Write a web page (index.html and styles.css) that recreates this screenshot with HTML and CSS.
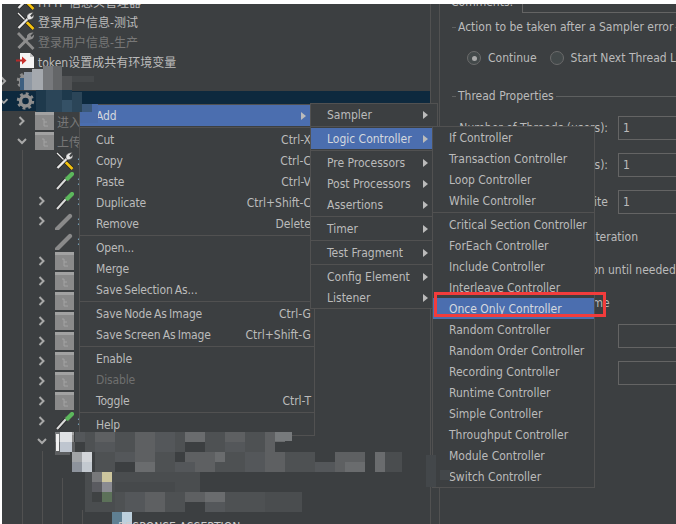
FILE: index.html
```html
<!DOCTYPE html>
<html lang="zh">
<head>
<meta charset="utf-8">
<title>JMeter context menu</title>
<link rel="stylesheet" href="styles.css">
</head>
<body>
<svg class="defs" width="0" height="0">
  <defs>
    <symbol id="i-tools" viewBox="0 0 18 18">
      <path d="M1.500 1l8 8" stroke="#222" stroke-width="2.600"/>
      <path d="M1.500 1l8 8" stroke="#eee" stroke-width="1.300"/>
      <path d="M10 10l7 7" stroke="#222" stroke-width="4"/>
      <path d="M10 10l7 7" stroke="#f4c20d" stroke-width="2.600"/>
      <path d="M2 16L12 6" stroke="#222" stroke-width="3.600"/>
      <path d="M2 16L12 6" stroke="#e8e8e8" stroke-width="2.400"/>
      <path d="M10.500 3.500Q12.500 .2 17 .5L14 3.500 15 5l2.600-2.400Q17.600 7 14 7.600L12 8Q9.700 6 10.500 3.500z" fill="#e8e8e8" stroke="#333" stroke-width=".5"/>
    </symbol>
    <symbol id="i-tools-off" viewBox="0 0 18 18">
      <path d="M1.500 1l15.500 16" stroke="#8a8a8a" stroke-width="2.800"/>
      <path d="M2 16L12 6" stroke="#8e8e8e" stroke-width="3"/>
      <path d="M10.500 3.500Q12.500 .2 17 .5L14 3.500 15 5l2.600-2.400Q17.600 7 14 7.600L12 8Q9.700 6 10.500 3.500z" fill="#8e8e8e"/>
    </symbol>
    <symbol id="i-doc" viewBox="0 0 19 18">
      <path d="M4 1h10l4 4v11H4z" fill="#f4f4f4"/>
      <path d="M14 1v4h4z" fill="#c4c4c4"/>
      <path d="M0 8.500h7" stroke="#b52a2a" stroke-width="2"/>
      <path d="M6 4.500l4.500 4-4.500 4z" fill="#c9302c"/>
    </symbol>
    <symbol id="i-gear" viewBox="0 0 18 18">
      <circle cx="9" cy="9" r="7.200" fill="none" stroke="#8b8b8b" stroke-width="3" stroke-dasharray="2.800 2.850"/>
      <circle cx="9" cy="9" r="5" fill="none" stroke="#8f8f8f" stroke-width="3.400"/>
    </symbol>
    <symbol id="i-box" viewBox="0 0 19 18">
      <rect x="0" y="0" width="19" height="18" fill="#8a8a8a"/>
      <rect x="0" y="0" width="19" height="3" fill="#a2a2a2"/>
      <path d="M7 7h2v7h4M9 10h3" fill="none" stroke="#a3a3a3" stroke-width="1"/>
    </symbol>
    <symbol id="i-drop" viewBox="0 0 19 18">
      <path d="M2 17L11 7" stroke="#222" stroke-width="3.600"/>
      <path d="M2 17L11 7" stroke="#d9d9d9" stroke-width="2.200"/>
      <path d="M10 5l4 4" stroke="#555" stroke-width="2"/>
      <path d="M12.500 6.500L17 2" stroke="#5cb85c" stroke-width="4.200" stroke-linecap="round"/>
    </symbol>
    <symbol id="i-drop-off" viewBox="0 0 19 18">
      <path d="M2 17L15 4" stroke="#8a8a8a" stroke-width="4.200" stroke-linecap="round"/>
    </symbol>
    <symbol id="c-right" viewBox="0 0 18 20"><path d="M2.500 6l4 4-4 4" fill="none" stroke="#a8a8a8" stroke-width="2"/></symbol>
    <symbol id="c-down" viewBox="0 0 18 20"><path d="M1 8l4 4 4-4" fill="none" stroke="#a8a8a8" stroke-width="2"/></symbol>
  </defs>
</svg>

<div class="app">
  <div class="tree-pane">
    <ul class="tree">
      <li class="row l0"><span class="chev"></span><svg class="ico"><use href="#i-tools"/></svg><span>HTTP 信息头管理器</span></li>
      <li class="row l0"><span class="chev"></span><svg class="ico"><use href="#i-tools"/></svg><span>登录用户信息-测试</span></li>
      <li class="row l0 off"><span class="chev"></span><svg class="ico"><use href="#i-tools-off"/></svg><span>登录用户信息-生产</span></li>
      <li class="row l0"><span class="chev"></span><svg class="ico"><use href="#i-doc"/></svg><span>token设置成共有环境变量</span></li>
      <li class="row l0"><svg class="chev"><use href="#c-right"/></svg><svg class="ico"><use href="#i-gear"/></svg></li>
      <li class="row l0 sel"><svg class="chev"><use href="#c-down"/></svg><svg class="ico"><use href="#i-gear"/></svg></li>
      <li class="row l1 off"><svg class="chev"><use href="#c-right"/></svg><svg class="ico"><use href="#i-box"/></svg><span>进入</span></li>
      <li class="row l1 off"><svg class="chev"><use href="#c-down"/></svg><svg class="ico"><use href="#i-box"/></svg><span>上传</span></li>
      <li class="row l2"><span class="chev"></span><svg class="ico"><use href="#i-tools"/></svg><span>:</span></li>
      <li class="row l2"><span class="chev"></span><svg class="ico"><use href="#i-drop"/></svg><span>:</span></li>
      <li class="row l2"><svg class="chev"><use href="#c-right"/></svg><svg class="ico"><use href="#i-drop"/></svg><span>:</span></li>
      <li class="row l2"><svg class="chev"><use href="#c-right"/></svg><svg class="ico"><use href="#i-drop-off"/></svg><span>:</span></li>
      <li class="row l2"><span class="chev"></span><svg class="ico"><use href="#i-drop-off"/></svg><span>:</span></li>
      <li class="row l2"><svg class="chev"><use href="#c-right"/></svg><svg class="ico"><use href="#i-box"/></svg></li>
      <li class="row l2"><svg class="chev"><use href="#c-right"/></svg><svg class="ico"><use href="#i-box"/></svg></li>
      <li class="row l2"><svg class="chev"><use href="#c-right"/></svg><svg class="ico"><use href="#i-box"/></svg></li>
      <li class="row l2"><svg class="chev"><use href="#c-right"/></svg><svg class="ico"><use href="#i-box"/></svg></li>
      <li class="row l2"><svg class="chev"><use href="#c-right"/></svg><svg class="ico"><use href="#i-box"/></svg></li>
      <li class="row l2"><svg class="chev"><use href="#c-right"/></svg><svg class="ico"><use href="#i-box"/></svg></li>
      <li class="row l2"><svg class="chev"><use href="#c-right"/></svg><svg class="ico"><use href="#i-box"/></svg></li>
      <li class="row l2"><svg class="chev"><use href="#c-right"/></svg><svg class="ico"><use href="#i-box"/></svg></li>
      <li class="row l2"><svg class="chev"><use href="#c-right"/></svg><svg class="ico"><use href="#i-drop"/></svg><span>:</span></li>
      <li class="row l2"><svg class="chev"><use href="#c-down"/></svg><svg class="ico"><use href="#i-box"/></svg></li>
    </ul>
  </div>

  <div class="form-pane">
    <div class="comments"><span class="comments-label">Comments:</span><span class="comments-input"></span></div>
    <div class="legend legend-action"><span>Action to be taken after a Sampler error</span></div>
    <div class="radios">
      <span class="radio on"></span><span class="radio-text">Continue</span>
      <span class="radio"></span><span class="radio-text">Start Next Thread Loop</span>
    </div>
    <div class="legend legend-thread"><span>Thread Properties</span></div>
    <div class="fields">
      <div class="field"><span class="field-label">Number of Threads (users):</span><span class="input">1</span></div>
      <div class="field"><span class="field-label">Ramp-up period (seconds):</span><span class="input">1</span></div>
      <div class="field last"><span class="field-label">Loop Count: Infinite</span><span class="input">1</span></div>
      <div class="check">Same user on each iteration</div>
      <div class="check">Delay Thread creation until needed</div>
      <div class="check">Specify Thread lifetime</div>
      <div class="field"><span class="field-label short">Duration (seconds)</span><span class="input"></span></div>
      <div class="field"><span class="field-label short">Startup delay (seconds)</span><span class="input"></span></div>
    </div>
  </div>
</div>

<div class="menu menu-main">
  <div class="item active"><span>Add</span><i class="arrow"></i></div>
  <hr>
  <div class="item"><span>Cut</span><kbd>Ctrl-X</kbd></div>
  <div class="item"><span>Copy</span><kbd>Ctrl-C</kbd></div>
  <div class="item"><span>Paste</span><kbd>Ctrl-V</kbd></div>
  <div class="item"><span>Duplicate</span><kbd>Ctrl+Shift-C</kbd></div>
  <div class="item"><span>Remove</span><kbd>Delete</kbd></div>
  <hr>
  <div class="item"><span>Open...</span></div>
  <div class="item"><span>Merge</span></div>
  <div class="item"><span>Save Selection As...</span></div>
  <hr>
  <div class="item"><span>Save Node As Image</span><kbd>Ctrl-G</kbd></div>
  <div class="item"><span>Save Screen As Image</span><kbd>Ctrl+Shift-G</kbd></div>
  <hr>
  <div class="item"><span>Enable</span></div>
  <div class="item disabled"><span>Disable</span></div>
  <div class="item"><span>Toggle</span><kbd>Ctrl-T</kbd></div>
  <hr>
  <div class="item"><span>Help</span></div>
</div>

<div class="menu menu-add">
  <div class="item"><span>Sampler</span><i class="arrow"></i></div>
  <hr>
  <div class="item active"><span>Logic Controller</span><i class="arrow"></i></div>
  <hr>
  <div class="item"><span>Pre Processors</span><i class="arrow"></i></div>
  <div class="item"><span>Post Processors</span><i class="arrow"></i></div>
  <div class="item"><span>Assertions</span><i class="arrow"></i></div>
  <hr>
  <div class="item"><span>Timer</span><i class="arrow"></i></div>
  <hr>
  <div class="item"><span>Test Fragment</span><i class="arrow"></i></div>
  <hr>
  <div class="item"><span>Config Element</span><i class="arrow"></i></div>
  <div class="item"><span>Listener</span><i class="arrow"></i></div>
</div>

<div class="menu menu-logic">
  <div class="item"><span>If Controller</span></div>
  <div class="item"><span>Transaction Controller</span></div>
  <div class="item"><span>Loop Controller</span></div>
  <div class="item"><span>While Controller</span></div>
  <hr>
  <div class="item"><span>Critical Section Controller</span></div>
  <div class="item"><span>ForEach Controller</span></div>
  <div class="item"><span>Include Controller</span></div>
  <div class="item"><span>Interleave Controller</span></div>
  <div class="item active"><span>Once Only Controller</span></div>
  <div class="item"><span>Random Controller</span></div>
  <div class="item"><span>Random Order Controller</span></div>
  <div class="item"><span>Recording Controller</span></div>
  <div class="item"><span>Runtime Controller</span></div>
  <div class="item"><span>Simple Controller</span></div>
  <div class="item"><span>Throughput Controller</span></div>
  <div class="item"><span>Module Controller</span></div>
  <div class="item"><span>Switch Controller</span></div>
</div>

<svg class="mosaic" width="676" height="524" viewBox="0 0 676 524">
  <path fill="#4a6ba8" d="M80 104h18v19H80z"/>
  <path fill="#3d5f80" d="M20 78h8v12h-8z"/>
  <path fill="#8f98a3" d="M24 72h10v18H24z"/>
  <path fill="#a5a9ae" d="M32 69h11v21H32z"/>
  <path fill="#77797c" d="M43 66h10v24H43z"/>
  <path fill="#646668" d="M53 66h9v24h-9z"/>
  <path fill="#505254" d="M62 76h10v14H62z"/>
  <path fill="#1e394c" d="M36 90h10v22H36zM62 90h10v10H62z"/>
  <path fill="#2b4558" d="M46 90h16v22H46zM72 92h10v20H72z"/>
  <path fill="#355166" d="M62 100h10v12H62z"/>
  <path fill="#3b587a" d="M82 104h10v8H82z"/>
  <path fill="#45484a" d="M72 76h22v6H72z"/>
  <path fill="#54575a" d="M75 432h10v10H75zM95 442h20v10H95zM155 432h20v20h-20zM225 442h20v10h-20zM115 452h20v10h-20zM175 462h20v10h-20zM245 452h20v20h-20zM315 462h20v10h-20zM125 492h20v20h-20zM205 502h20v10h-20z"/>
  <path fill="#4e5153" d="M85 432h10v20H85zM115 432h20v20h-20zM175 432h10v20h-10zM205 432h20v20h-20zM245 432h20v20h-20zM95 452h20v20H95zM155 452h20v20h-20zM215 452h30v20h-30zM285 452h30v20h-30zM95 492h30v20H95zM165 492h20v20h-20zM225 492h40v20h-40z"/>
  <path fill="#5e6062" d="M95 432h20v10H95zM135 432h20v20h-20zM135 452h20v10h-20zM185 452h30v10h-30zM195 462h20v10h-20zM265 452h20v20h-20zM335 452h30v20h-30zM145 492h20v20h-20zM185 492h20v10h-20zM225 432h20v10h-20zM265 432h10v20h-10z"/>
  <path fill="#6a6c6e" d="M135 462h20v10h-20zM345 462h20v10h-20zM375 452h10v20h-10zM185 432h20v10h-20zM215 452h10v10h-10zM205 492h20v10h-20zM275 432h10v10h-10z"/>
  <path fill="#777a7c" d="M55 432h10v10H55zM275 432h17v9h-17z"/>
  <path fill="#4a4d4f" d="M85 472h30v40H85zM115 472h60v10h-60zM175 472h25v20h-25zM385 452h17v20h-17zM265 492h37v20h-37z"/>
  <path fill="#46494b" d="M115 482h60v10H115z"/>
  <path fill="#5d5f61" d="M55 442h20v10H55zM55 452h15v3H55z"/>
  <path fill="#dfe1e4" d="M60 432h12v10H60z"/>
  <path fill="#bec5cf" d="M60 442h12v10H60z"/>
  <path fill="#f0f0f0" d="M56 434h3v17h-3z"/>
  <path fill="#a0a3a6" d="M72 452h10v10H72z"/>
  <path fill="#d2d5d9" d="M82 452h10v10H82z"/>
  <path fill="#8d939c" d="M72 462h10v10H72z"/>
  <path fill="#c3c9d0" d="M82 462h10v10H82z"/>
  <path fill="#77787a" d="M92 472h10v10H92z"/>
  <path fill="#cdc69e" d="M102 472h10v10h-10z"/>
  <path fill="#5a5b60" d="M92 482h10v10H92z"/>
  <path fill="#8a8b92" d="M102 482h10v10h-10z"/>
  <path fill="#3f4243" d="M92 492h10v10H92z"/>
  <path fill="#5c7159" d="M102 492h10v10h-10z"/>
  <path fill="#5f7f92" d="M112 512h10v12h-10z"/>
  <path fill="#bdd0dd" d="M122 512h10v12h-10z"/>
  <path fill="#43474a" d="M426 455h10v32h-10zM440 470h10v10h-10z"/>
</svg>

<div class="tail-text">RESPONSE ASSERTION</div>
<div class="callout"></div>
</body>
</html>
```

FILE: styles.css
```css
* { box-sizing: border-box; }

html, body {
  height: 100%;
}

body {
  margin: 0;
  background: #fff;
  overflow: hidden;
  font: 12px "DejaVu Sans", "Noto Sans CJK SC", sans-serif;
  font-stretch: condensed;
  color: #bbb;
}

.defs { position: absolute; }

.app {
  display: flex;
  height: 520px;
  margin: 4px 0 0 2px;
  width: 674px;
  background: #3c3f41;
  overflow: hidden;
}

/* tree */
.tree-pane {
  width: 429px;
  flex: none;
  border-right: 1px solid #515151;
  overflow: hidden;
  background:
    linear-gradient(#515151, #515151) 20px 146px / 1px 100% no-repeat,
    linear-gradient(#515151, #515151) 40px 447px / 1px 100% no-repeat,
    linear-gradient(#515151, #515151) 60px 474px / 1px 100% no-repeat,
    linear-gradient(#515151, #515151) 80px 506px / 1px 100% no-repeat;
}

.tree {
  list-style: none;
  margin: -13px 0 0;
  padding: 0;
}

.row {
  display: flex;
  align-items: center;
  height: 20px;
  white-space: nowrap;
}

.row.l0 { padding-left: 0; }
.row.l0 .chev { margin-left: -3px; width: 17px; }
.row.l1 { padding-left: 15px; }
.row.l2 { padding-left: 35px; }
.row.off { color: #777; }
.row.sel { background: #0d293e; }

.chev {
  display: block;
  flex: none;
  width: 18px;
  height: 20px;
}

.ico {
  flex: none;
  width: 19px;
  height: 18px;
  margin-right: 3px;
}

/* form */
.form-pane {
  flex: 1;
  margin-left: 8px;
  border-left: 1px solid #515151;
  overflow: hidden;
  white-space: nowrap;
  min-width: 0;
}

.comments {
  display: flex;
  height: 9px;
  align-items: flex-end;
  padding-left: 11px;
  overflow: hidden;
}

.comments-label { width: 71px; flex: none; line-height: 16px; margin-bottom: 3px; }

.comments-input {
  flex: 1;
  height: 20px;
  border: 1px solid #646464;
  margin-right: -2px;
}

.legend {
  display: flex;
  align-items: center;
  gap: 2px;
  height: 16px;
  padding-left: 12px;
}

.legend::before {
  content: "";
  width: 4px;
  height: 1px;
  background: #5e6060;
}

.legend::after {
  content: "";
  flex: 1;
  height: 1px;
  background: #5e6060;
}

.legend-action { margin-top: 6px; }
.legend-thread { margin-top: 20px; }

.radios {
  display: flex;
  align-items: center;
  height: 20px;
  margin-top: 13px;
  padding-left: 27px;
}

.radio {
  flex: none;
  width: 14px;
  height: 14px;
  border: 1px solid #6b6b6b;
  border-radius: 50%;
  background: #43494a;
  display: flex;
  align-items: center;
  justify-content: center;
}

.radio.on::after {
  content: "";
  width: 5px;
  height: 5px;
  border-radius: 50%;
  background: #a9a9a9;
}

.radio-text { margin: 0 13px 0 7px; }

.fields {
  display: flex;
  flex-direction: column;
  margin-top: 12px;
}

.field {
  display: flex;
  align-items: center;
  height: 24px;
  margin-bottom: 13px;
}

.field.last { margin-bottom: 11px; }

.field-label {
  width: 168px;
  flex: none;
  text-align: right;
}

.field-label.short {
  text-align: left;
  padding-left: 12px;
}

.input {
  flex: none;
  width: 90px;
  height: 24px;
  margin-left: 10px;
  border: 1px solid #646464;
  padding: 0 4px;
  line-height: 22px;
}

.check {
  height: 24px;
  line-height: 24px;
  padding-left: 45px;
  margin-bottom: 9px;
}

.check:last-of-type { margin-bottom: 11px; }

/* popup menus */
.menu {
  position: absolute;
  background: #3c3f41;
  border: 1px solid #515151;
  white-space: nowrap;
}

.menu hr {
  height: 3px;
  margin: 0;
  border: 0;
  background: linear-gradient(#515151, #515151) 0 1px / 100% 1px no-repeat;
}

.item {
  display: flex;
  align-items: center;
  justify-content: space-between;
  height: 21px;
}

.item.active { background: #4b6eaf; color: #d4d8de; }
.item.disabled { color: #6f6f6f; }

.item kbd {
  font: inherit;
  padding-right: 3px;
}

.arrow {
  flex: none;
  width: 0;
  height: 0;
  border-left: 5px solid #bbb;
  border-top: 4px solid transparent;
  border-bottom: 4px solid transparent;
}

.menu-main {
  left: 79px;
  top: 104px;
  width: 236px;
}

.menu-main .item { padding-left: 16px; }
.menu-main .item span { word-spacing: -1px; letter-spacing: -.15px; }
.menu-main .arrow { margin-right: 8px; }

.menu-add {
  left: 310px;
  top: 103px;
  width: 128px;
}

.menu-add .item { padding: 0 9px 0 16px; }

.menu-logic {
  left: 432px;
  top: 126px;
  width: 163px;
}

.menu-logic .item { padding-left: 16px; }

/* overlays */
.mosaic {
  position: absolute;
  left: 0;
  top: 0;
}

.tail-text {
  position: absolute;
  left: 118px;
  top: 520px;
  color: #ccc;
}

.callout {
  position: absolute;
  left: 434px;
  top: 292px;
  width: 172px;
  height: 25px;
  border: 3px solid #f23c3c;
}
```
